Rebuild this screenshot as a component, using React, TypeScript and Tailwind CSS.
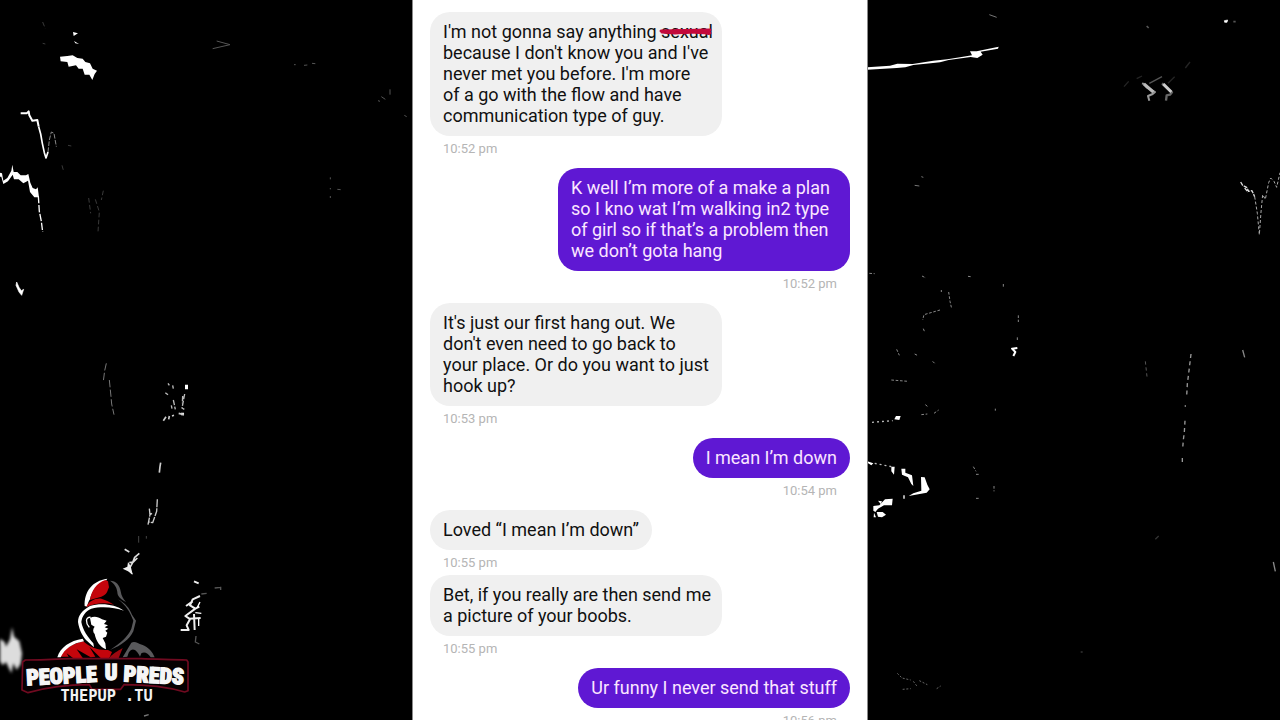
import React from "react";

type Message = {
  from: "them" | "me";
  body: React.ReactNode;
  time: string;
  grouped?: boolean;
  wide?: boolean;
};

function Struck({ children }: { children: React.ReactNode }) {
  return (
    <span className="relative">
      {children}
      <svg
        className="absolute -left-0.5 top-[6px] h-[9px] w-[54px]"
        viewBox="0 0 54 9"
        fill="none"
        stroke="#c3093b"
        strokeLinecap="round"
        strokeLinejoin="round"
        aria-hidden="true"
      >
        <path d="M2 4 L51 3 M3 5 L16 6 L30 5 L51 6" strokeWidth="3" />
        <path d="M18 2.500 L26 6.500 L36 3 L50 7" strokeWidth="2" />
      </svg>
    </span>
  );
}

const messages: Message[] = [
  {
    from: "them",
    wide: true,
    body: (
      <>
        I'm not gonna say anything <Struck>sexual</Struck>
        {"\nbecause I don't know you and I've\nnever met you before. I'm more\nof a go with the flow and have\ncommunication type of guy."}
      </>
    ),
    time: "10:52 pm",
  },
  {
    from: "me",
    wide: true,
    body: "K well I’m more of a make a plan\nso I kno wat I’m walking in2 type\nof girl so if that’s a problem then\nwe don’t gota hang",
    time: "10:52 pm",
  },
  {
    from: "them",
    wide: true,
    body: "It's just our first hang out. We\ndon't even need to go back to\nyour place. Or do you want to just\nhook up?",
    time: "10:53 pm",
  },
  { from: "me", body: "I mean I’m down", time: "10:54 pm" },
  { from: "them", body: "Loved “I mean I’m down”", time: "10:55 pm", grouped: true },
  {
    from: "them",
    wide: true,
    body: "Bet, if you really are then send me\na picture of your boobs.",
    time: "10:55 pm",
  },
  { from: "me", body: "Ur funny I never send that stuff", time: "10:56 pm" },
];

function Bubble({ from, body, time, grouped, wide }: Message) {
  const mine = from === "me";
  const tone = mine ? "bg-[#5f18d3] text-[#fbe6ff]" : "bg-[#f0f0f0] text-[#111111]";
  const size = wide ? "w-[292px] max-w-full pl-[13px] pr-1" : "max-w-[292px] px-[13px]";
  return (
    <li className={mine ? "flex flex-col items-end" : "flex flex-col items-start"}>
      <p className={`whitespace-pre-line rounded-[20px] pt-[9px] pb-[10px] text-[18px] leading-[21px] ${tone} ${size}`}>
        {body}
      </p>
      <time
        className={`px-[13px] pt-1 text-[13px] leading-[18px] text-[#b5b5b5] ${grouped ? "mb-[3px]" : "mb-[10px]"}`}
      >
        {time}
      </time>
    </li>
  );
}

function Backdrop() {
  return (
    <svg
      className="absolute inset-0 h-full w-full"
      viewBox="0 0 3840 2160"
      preserveAspectRatio="xMidYMid slice"
      fill="none"
      stroke="#fff"
      strokeLinejoin="round"
      aria-hidden="true"
    >
      {/* upper left */}
      <g>
        <path
          fill="#fff"
          stroke="none"
          d="M180 170 L202 168 L218 166 L232 174 L248 176 L256 186 L270 190 L278 206 L291 212 L284 222 L277 240 L268 224 L254 224 L248 206 L236 206 L228 196 L206 200 L202 186 L182 184 Z M219 96 L234 100 L221 108 Z M222 123 L237 132 L226 130 Z"
        />
        <path d="M62 340 L80 340 L86 334 L88 346 L97 362 L112 360 L116 380" strokeWidth="6" />
        <path d="M116 380 L122 402 L127 430 L133 458 L138 474 L144 456" strokeWidth="5" />
        <path d="M144 456 L148 420 L154 396 L162 400 L169 440" strokeWidth="3" stroke="#888" strokeDasharray="14 4" />
        <path
          fill="#fff"
          stroke="none"
          d="M0 518 L6 520 L10 542 L22 534 L34 512 L37 494 L41 516 L52 516 L62 526 L78 526 L85 522 L91 548 L98 564 L108 568 L113 562 L117 592 L103 592 L90 576 L84 542 L70 550 L56 538 L42 538 L38 524 L24 544 L10 552 L4 530 L0 530 Z"
        />
        <path d="M115 588 L118 634 L124 664 L128 696" strokeWidth="4" strokeDasharray="22 5" />
        <path
          d="M266 594 L272 640 M286 598 L298 636 L294 696 M310 572 L304 600 M128 66 L136 86 M204 436 L214 438 M186 496 L191 514 M128 130 L136 132"
          stroke="#3a3a3a"
          strokeWidth="3"
          strokeDasharray="14 7"
        />
      </g>
      {/* middle left */}
      <g transform="translate(0 720)">
        <path fill="#fff" stroke="#fff" strokeWidth="2" d="M50 126 L57 142 L64 152 L71 148 L65 166 L57 156 L48 136 Z" />
        <path d="M319 370 L314 392 L310 424 M328 420 L333 470 L335 492 L342 524" stroke="#777" strokeWidth="3" strokeDasharray="22 7" />
        <path d="M555 434 h9 v14 h-9 Z M543 518 h9 v8 h-9 Z" fill="#fff" stroke="none" />
        <path
          d="M554 462 L546 504 L553 508 M548 468 L547 490 M496 458 L504 464 M518 436 L520 446 M520 480 L526 508 M514 496 L516 506 M504 430 L508 436"
          strokeWidth="4"
          stroke="#bbb"
          strokeDasharray="16 4"
        />
        <path d="M490 542 L498 530 M506 538 L508 528 M516 528 L522 526 M536 520 L552 524" strokeWidth="5" stroke="#ccc" />
        <path d="M482 668 L480 680 L478 698" strokeWidth="5" stroke="#ccc" />
      </g>
      {/* left of panel */}
      <g transform="translate(600 0)" stroke="#555" strokeWidth="3">
        <path d="M38 146 L90 134 L50 123 M312 196 L322 195 M336 190 L346 191 M282 194 L287 194" />
        <path d="M534 302 L540 304 M544 290 L556 298 M570 268 V284 M613 346 L620 350 M391 532 V538 M391 564 V568 M412 568 L422 569 M391 588 V594" />
      </g>
      {/* lower left */}
      <g transform="translate(300 1380)">
        <path d="M172 118 L170 154 L158 188 L146 186 M148 146 L150 164 L144 194 M150 164 L156 160" strokeWidth="4" stroke="#ccc" strokeDasharray="24 3" />
        <path d="M74 268 L88 276 M118 280 L104 292 L98 308 L88 326 L96 342 M112 294 L100 306 L88 308" strokeWidth="5" stroke="#ddd" />
        <path d="M84 306 L92 318 L98 344 L84 334 L68 326 L82 320 Z" fill="#eee" stroke="none" />
        <path d="M116 228 V248 M139 228 V236" stroke="#444" strokeWidth="3" />
        <path d="M282 364 L296 370 M300 408 L278 418 L270 436 L286 446 L298 440 M258 438 L278 424 M286 446 L256 468 L268 476 L302 474 M282 462 L284 510 M270 478 L260 496 L266 510 L242 510" strokeWidth="6" stroke="#eee" />
        <path d="M304 460 L286 458 M296 476 V498 M300 426 L292 442" strokeWidth="4" />
        <path d="M288 528 L286 546 L298 552 M344 384 L362 382 M362 380 V390 M304 402 L320 400" strokeWidth="4" stroke="#555" />
        <path d="M132 768 L146 764" strokeWidth="4" stroke="#777" />
      </g>
      <g filter="url(#haze)">
        <path fill="#ddd" stroke="none" d="M0 1916 L14 1926 L18 1940 L30 1918 L36 1882 L42 1910 L58 1924 L66 1960 L62 1992 L50 2010 L40 1990 L34 2020 L18 1986 L8 1996 L0 1984 Z" />
      </g>
      {/* upper right */}
      <g transform="translate(2580 0)">
        <path
          fill="#fff"
          stroke="none"
          d="M22 202 L90 197 L112 191 L158 192 L220 182 L262 178 L300 172 L336 166 L330 154 L350 154 L416 140 L414 146 L362 155 L368 164 L352 174 L332 171 L266 180 L240 187 L212 190 L160 195 L136 202 L110 204 L22 209 Z"
        />
        <path d="M388 44 L410 52 M184 530 L190 532 M164 556 L178 558" strokeWidth="3" stroke="#777" />
      </g>
      {/* far right */}
      <g transform="translate(3210 0)">
        <path d="M216 250 L222 252 L230 262 L255 276 L248 282 L234 288 L238 302" strokeWidth="6" stroke="#999" />
        <path d="M222 252 L250 276" strokeWidth="9" stroke="#bbb" />
        <path d="M276 250 L306 277 L300 284 L290 286 L288 302" strokeWidth="7" stroke="#666" />
        <path d="M280 252 L304 276" strokeWidth="9" stroke="#ccc" />
        <path d="M238 250 L276 230" strokeWidth="4" stroke="#555" />
        <path d="M294 250 L314 230 M346 204 L360 186 M162 260 L176 244 M200 236 L216 228" strokeWidth="4" stroke="#242424" />
        <path d="M463 62 L473 60 L471 67 L464 67 Z" fill="#fff" strokeWidth="2" />
        <path d="M490 65 H497 M230 78 L236 84" stroke="#555" strokeWidth="5" />
        <path d="M512 546 L518 556 L530 562 L536 574 L546 572 L554 590 M524 564 L534 576" strokeWidth="4" stroke="#ddd" strokeDasharray="12 3" />
        <path d="M554 590 L562 640 L568 704 L573 636 L578 584 L586 598 L596 548 L602 534 L612 544 L620 562 L630 518" strokeWidth="3" stroke="#aaa" strokeDasharray="9 6" />
      </g>
      {/* middle right */}
      <g transform="translate(2580 720)">
        <path
          fill="#fff"
          stroke="none"
          d="M108 528 L122 528 L118 540 L103 538 Z M22 664 L40 670 L34 676 L22 668 Z M94 680 L104 680 L102 704 L94 694 Z M124 686 H136 V698 L156 706 L160 738 L154 732 L144 712 L126 704 Z M183 711 L194 712 L202 734 L209 748 L200 758 L146 768 L160 760 L184 752 Z M130 766 L134 766 V776 H130 Z M75 778 L98 776 L96 796 L72 796 L54 806 L46 816 L40 812 V798 L58 796 Z M50 816 L68 816 L78 824 L66 832 L54 830 Z M54 782 L66 784 L62 792 Z M42 818 L48 832 L41 832 Z"
        />
        <path d="M472 324 L456 326 L466 336 L460 348" strokeWidth="6" />
        <path d="M22 558 V548 M36 547 L98 542 M44 670 L94 680" strokeWidth="4" stroke="#bbb" strokeDasharray="6 9" />
        <path
          d="M28 100 L44 101 M186 108 L198 114 M324 109 L332 110 M430 132 V140 M244 150 V156 M266 156 L270 184 L275 206 M240 210 L192 224 L188 240 M190 266 L194 276 M110 328 L118 346 M164 342 L172 346 M218 364 L224 370 M94 420 L144 424 M196 494 L206 502 M184 524 L202 522 M222 520 L236 510 M406 506 V512 M475 226 V246 M472 292 V300 M340 680 L348 694 M402 738 V754 M348 703 H356 M348 775 H356"
          strokeWidth="3"
          stroke="#888"
          strokeDasharray="8 5"
        />
      </g>
      <g transform="translate(3210 720)">
        <path d="M363 342 L356 400 L352 432 L350 468 M346 496 V500 M345 542 L343 576 L340 600 L338 626 M337 654 V666" strokeWidth="4" stroke="#999" strokeDasharray="12 10" />
        <path d="M518 330 L524 352 M610 966 L616 994" strokeWidth="4" stroke="#888" />
        <path d="M226 364 L231 410" strokeWidth="3" stroke="#555" strokeDasharray="10 8" />
        <path d="M32 1236 h6 M256 898 L266 888" strokeWidth="4" stroke="#333" />
      </g>
      {/* lower right */}
      <path
        transform="translate(2580 1560)"
        d="M112 460 L126 474 L152 480 M128 508 L152 506 M160 484 L172 500 M178 482 L202 494 M230 506 L242 498"
        strokeWidth="3"
        stroke="#666"
        strokeDasharray="6 5"
      />
      <defs>
        <filter id="haze">
          <feGaussianBlur stdDeviation="4" />
        </filter>
      </defs>
    </svg>
  );
}

function Logo() {
  return (
    <svg className="absolute bottom-0 left-0 h-40 w-[220px]" viewBox="0 0 660 480" role="img" aria-label="People v Preds">
      {/* hood */}
      <path fill="#000" d="M254 130 L270 84 L316 56 L350 68 L374 120 L408 180 L396 222 L352 272 L464 292 H172 L250 240 Z" />
      <path fill="#fff" d="M254 138 C252 96 276 62 322 56 L318 62 C290 74 276 92 270 118 C266 124 262 132 262 140 Z" />
      <path fill="#c4050c" d="M316 60 L324 64 L327 82 C322 92 322 104 304 110 L270 120 C274 92 290 68 316 60 Z" />
      <path fill="#c4050c" d="M258 142 C268 122 286 114 304 116 C318 120 330 126 342 134 C312 126 284 130 258 142 Z" />
      <path fill="#fff" d="M372 152 C344 132 302 128 270 138 C246 152 234 166 234 186 C238 210 246 226 258 240 L282 262 L280 250 C264 232 248 210 244 186 C246 168 256 154 274 146 C306 138 344 142 372 152 Z" />
      <path fill="#59595b" d="M330 62 C348 62 360 76 362 94 C364 108 370 118 378 126 C358 116 352 106 352 96 C350 82 344 72 330 62 Z" />
      <path fill="#59595b" d="M354 118 C376 130 388 144 396 164 L408 182 L400 214 C388 238 366 256 330 270 C360 250 384 230 394 206 L400 182 C390 156 378 136 354 118 Z" />
      {/* face */}
      <path fill="#fff" d="M270 174 C282 168 294 170 306 178 L320 182 L312 192 L324 196 L314 202 L325 206 L316 212 L322 218 L318 230 L308 234 L316 250 L318 268 C300 262 288 242 284 222 C278 216 278 206 284 200 L274 194 Z" />
      <path fill="none" stroke="#fff" strokeWidth="4" d="M272 172 C256 170 256 188 268 202" />
      {/* shoulders */}
      <path fill="#c4050c" d="M180 290 C192 264 220 252 250 244 C270 262 296 272 324 270 L336 276 L328 294 H302 L268 260 L286 290 L272 292 L230 268 L250 296 H222 L200 280 L206 290 Z" />
      <path fill="#fff" d="M172 292 C180 262 210 242 248 236 L252 244 C218 250 194 266 182 292 Z" />
      <path fill="#9c0810" d="M328 294 C338 280 352 274 368 264 L356 294 Z" />
      <path fill="#59595b" d="M368 292 L394 248 C404 242 414 250 426 254 C446 262 458 276 464 292 H452 C444 278 432 274 424 280 L420 290 C412 272 398 258 386 278 L382 290 Z" />
      {/* wordmark plate */}
      <path
        fill="#050001"
        stroke="#700a20"
        strokeWidth="5"
        strokeLinejoin="round"
        d="M76 300 C150 300 180 296 214 296 H424 C460 298 510 298 560 300 L564 306 V392 L554 396 C500 380 440 374 372 374 L362 388 H276 L268 374 C200 374 140 382 84 398 L66 390 L68 306 Z"
      />
      <g
        fill="#f6f6f6"
        stroke="#f6f6f6"
        strokeWidth="4"
        fontFamily="'Roboto Condensed', Roboto, sans-serif"
        fontWeight="900"
        fontSize="66"
      >
        <text x="80" y="376" transform="rotate(-3 80 376)">PEOPLE</text>
        <text x="333" y="360" textAnchor="middle">U</text>
        <text x="370" y="364" transform="rotate(3 370 364)">PREDS</text>
      </g>
      <text
        x="320"
        y="424"
        fill="#f2f2f2"
        fontFamily="'DejaVu Sans Mono', monospace"
        fontWeight="700"
        fontSize="46"
        textAnchor="middle"
      >
        THEPUP .TU
      </text>
    </svg>
  );
}

export default function App() {
  return (
    <div className="relative flex h-screen justify-center overflow-hidden bg-black font-['Roboto',sans-serif]">
      <Backdrop />
      <Logo />
      <main className="relative h-full w-full max-w-[456px] overflow-hidden border-x border-[#8a8a8a] bg-white">
        <ul className="flex flex-col px-[17px] pt-3">
          {messages.map((message, index) => (
            <Bubble key={index} {...message} />
          ))}
        </ul>
      </main>
    </div>
  );
}
